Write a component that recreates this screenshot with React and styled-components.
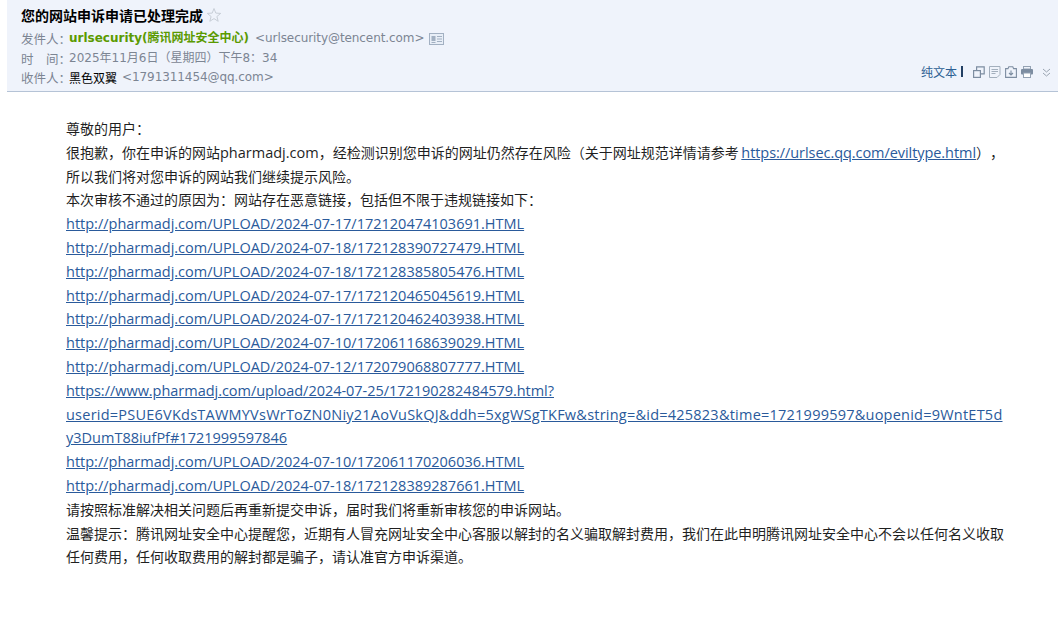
import React from "react";
import styled, { createGlobalStyle } from "styled-components";

const Global = createGlobalStyle`
  html, body { margin: 0; padding: 0; background: #fff; }
  body { font-family: "DejaVu Sans", "Noto Sans CJK SC", sans-serif; text-spacing-trim: space-all; }
`;
const Page = styled.div`
  width: 1058px;
  height: 627px;
  overflow: hidden;
  padding-left: 7px;
  box-sizing: border-box;
`;
const Header = styled.header`
  position: relative;
  height: 92px;
  box-sizing: border-box;
  background: #eff3fb;
  border-bottom: 1px solid #b5c3d6;
  padding: 5px 0 0 14px;
`;
const Subject = styled.h1`
  margin: 0 0 4px;
  display: flex;
  align-items: center;
  gap: 3px;
  height: 20px;
  font: 700 14px/20px "Noto Sans CJK SC", sans-serif;
  color: #000;
`;
const Star = styled.span`
  display: inline-flex;
  width: 16px;
  height: 16px;
`;
const MetaRow = styled.div`
  display: flex;
  align-items: center;
  height: 19.500px;
  font-size: 12px;
  line-height: 19px;
  color: #7c8593;
  white-space: nowrap;
`;
const Label = styled.span`
  font-family: "Noto Sans CJK SC", sans-serif;
  color: #7c8593;
  width: 48px;
  font-size: 12.500px;
`;
const Sender = styled.b`
  color: #5b9a00;
  font-weight: 700;
  margin-right: 6px;
  font-size: 12px;
`;
const Address = styled.span`
  letter-spacing: -0.08px;
`;
const When = styled.span``;
const Name = styled.span`
  font-family: "Noto Sans CJK SC", sans-serif;
  color: #000;
  margin-right: 5px;
`;
const CardWrap = styled.span`
  display: inline-flex;
  margin-left: 5px;
`;
const Tools = styled.div`
  position: absolute;
  left: 914px;
  top: 63px;
  display: flex;
  align-items: center;
  height: 18px;
`;
const PlainText = styled.a`
  font: 400 12px/18px "Noto Sans CJK SC", sans-serif;
  color: #2d5f93;
  padding-right: 6px;
  margin-right: 10px;
  position: relative;
  &::after {
    content: "";
    position: absolute;
    right: 0;
    top: 3px;
    height: 11px;
    width: 2px;
    background: #223f63;
  }
`;
const IconBtn = styled.span`
  display: inline-flex;
  width: 12px;
  height: 12px;
  margin-right: ${p => p.$gap ?? 4}px;
`;
const Body = styled.main`
  padding: 25px 0 0 59px;
  width: 940px;
  font-family: "Open Sans", "Noto Sans CJK SC", sans-serif;
  font-size: 14px;
  line-height: 23.800px;
  color: #1f1f1f;
`;
const Line = styled.div``;
const Latin = styled.span`
  font-size: 14.500px;
`;
const Link = styled.a`
  color: #2a5a9b;
  font-size: 14.500px;
  text-decoration: underline;
  letter-spacing: ${p => p.$tracking ?? 0}px;
  white-space: nowrap;
`;
const InlineLink = styled(Link)`
  margin-left: -1px;
`;

const stroke = "#7d8da1";
const CopyIcon = () => (
  <svg width="12" height="12" viewBox="0 0 12 12" fill="none" stroke={stroke} strokeWidth="1.200">
    <rect x="0.600" y="4.600" width="6.800" height="6.800" />
    <path d="M3.600 4.500V0.800h7.600v7h-3.800" />
  </svg>
);
const NoteIcon = () => (
  <svg width="12" height="12" viewBox="0 0 12 12" fill="none" stroke="#a3afbd" strokeWidth="1">
    <path d="M0.500 0.500h10.500v8l-3 3H0.500z" />
    <path d="M2.500 3.500h6.500M2.500 5.500h6.500M2.500 7.500h4" />
  </svg>
);
const SaveIcon = () => (
  <svg width="12" height="12" viewBox="0 0 12 12" fill="none" stroke={stroke} strokeWidth="1.100">
    <path d="M0.600 11.400V2.600h2.400l0.800-1.800h4l0.800 1.800h2.800v8.800z" />
    <path d="M6 4.500v4.500M4 7l2 2 2-2" />
  </svg>
);
const PrintIcon = () => (
  <svg width="12" height="12" viewBox="0 0 12 12">
    <rect x="2.500" y="0.500" width="7" height="2.500" fill="none" stroke="#94a2b3" />
    <rect x="0" y="3" width="12" height="5.500" rx="1" fill={stroke} />
    <rect x="2.500" y="7" width="7" height="4.500" fill="#fff" stroke="#94a2b3" />
  </svg>
);
const MoreIcon = () => (
  <svg width="9" height="9" viewBox="0 0 9 9" fill="none" stroke="#9aa4b1" strokeWidth="1">
    <path d="M1 1l3.500 3 3.500-3M1 5l3.500 3 3.500-3" />
  </svg>
);
const CardIcon = () => (
  <svg width="16" height="12" viewBox="0 0 16 12">
    <rect x="0.500" y="0.500" width="14" height="11" fill="#e8eef7" stroke="#a2b0c2" />
    <rect x="2.500" y="3" width="4" height="5" fill="#a2b0c2" />
    <path d="M8 3.500h5M8 6h5M8 8.500h5M2.500 9.500h4" stroke="#a2b0c2" />
  </svg>
);
const StarIcon = () => (
  <svg width="16" height="16" viewBox="0 0 16 16" fill="none" stroke="#c3c9d2" strokeWidth="0.900">
    <path d="M8 1.500l1.800 4.600 4.900 0.300-3.800 3.100 1.300 4.800L8 11.600l-4.200 2.700 1.300-4.800-3.800-3.100 4.900-0.300z" />
  </svg>
);

const links1 = [
  "http://pharmadj.com/UPLOAD/2024-07-17/172120474103691.HTML",
  "http://pharmadj.com/UPLOAD/2024-07-18/172128390727479.HTML",
  "http://pharmadj.com/UPLOAD/2024-07-18/172128385805476.HTML",
  "http://pharmadj.com/UPLOAD/2024-07-17/172120465045619.HTML",
  "http://pharmadj.com/UPLOAD/2024-07-17/172120462403938.HTML",
  "http://pharmadj.com/UPLOAD/2024-07-10/172061168639029.HTML",
  "http://pharmadj.com/UPLOAD/2024-07-12/172079068807777.HTML",
];
const links2 = [
  "http://pharmadj.com/UPLOAD/2024-07-10/172061170206036.HTML",
  "http://pharmadj.com/UPLOAD/2024-07-18/172128389287661.HTML",
];

export default function App() {
  return (
    <Page>
      <Global />
      <Header>
        <Subject>您的网站申诉申请已处理完成<Star><StarIcon /></Star></Subject>
        <MetaRow>
          <Label>发件人：</Label>
          <Sender>urlsecurity(腾讯网址安全中心)</Sender>
          <Address>&lt;urlsecurity@tencent.com&gt;</Address>
          <CardWrap><CardIcon /></CardWrap>
        </MetaRow>
        <MetaRow>
          <Label>时　间：</Label>
          <When>2025年11月6日（星期四）下午8：34</When>
        </MetaRow>
        <MetaRow>
          <Label>收件人：</Label>
          <Name>黑色双翼</Name>
          <Address>&lt;1791311454@qq.com&gt;</Address>
        </MetaRow>
        <Tools>
          <PlainText>纯文本</PlainText>
          <IconBtn><CopyIcon /></IconBtn>
          <IconBtn><NoteIcon /></IconBtn>
          <IconBtn><SaveIcon /></IconBtn>
          <IconBtn $gap={9}><PrintIcon /></IconBtn>
          <MoreIcon />
        </Tools>
      </Header>
      <Body>
        <Line>尊敬的用户：</Line>
        <Line>很抱歉，你在申诉的网站<Latin>pharmadj.com</Latin>，经检测识别您申诉的网址仍然存在风险（关于网址规范详情请参考 <InlineLink $tracking={-0.06}>https://urlsec.qq.com/eviltype.html</InlineLink>），所以我们将对您申诉的网站我们继续提示风险。</Line>
        <Line>本次审核不通过的原因为：网站存在恶意链接，包括但不限于违规链接如下：</Line>
        {links1.map(l => <Line key={l}><Link>{l}</Link></Line>)}
        <Line><Link $tracking={-0.03}>https://www.pharmadj.com/upload/2024-07-25/172190282484579.html?</Link></Line>
        <Line><Link $tracking={0.23}>userid=PSUE6VKdsTAWMYVsWrToZN0Niy21AoVuSkQJ&amp;ddh=5xgWSgTKFw&amp;string=&amp;id=425823&amp;time=1721999597&amp;uopenid=9WntET5d</Link></Line>
        <Line><Link>y3DumT88iufPf#1721999597846</Link></Line>
        {links2.map(l => <Line key={l}><Link>{l}</Link></Line>)}
        <Line>请按照标准解决相关问题后再重新提交申诉，届时我们将重新审核您的申诉网站。</Line>
        <Line>温馨提示：腾讯网址安全中心提醒您，近期有人冒充网址安全中心客服以解封的名义骗取解封费用，我们在此申明腾讯网址安全中心不会以任何名义收取任何费用，任何收取费用的解封都是骗子，请认准官方申诉渠道。</Line>
      </Body>
    </Page>
  );
}
